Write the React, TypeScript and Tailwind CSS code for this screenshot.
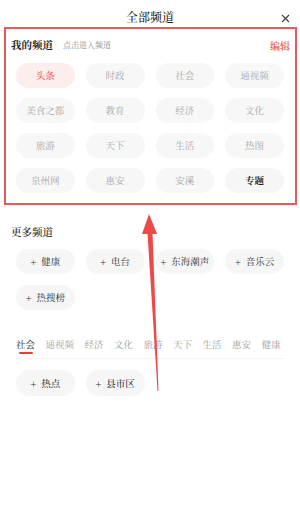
import React from "react";

const myChannels = [
  "头条", "时政", "社会", "通视频",
  "美食之都", "教育", "经济", "文化",
  "旅游", "天下", "生活", "热图",
  "泉州网", "惠安", "安溪", "专题",
];

const moreChannels = ["健康", "电台", "东海潮声", "音乐云", "热搜榜"];

const tabs = ["社会", "通视频", "经济", "文化", "旅游", "天下", "生活", "惠安", "健康"];

export default function App() {
  return (
    <div className="relative w-[300px] h-[522px] bg-white overflow-hidden font-['Noto_Serif_CJK_SC','Noto_Sans_CJK_SC',sans-serif]">
      {/* title bar */}
      <div className="relative h-[34px] flex items-center justify-center">
        <span className="text-[12px] font-medium text-[#222]">全部频道</span>
        <svg className="absolute right-[10px] top-[14px]" width="9" height="9" viewBox="0 0 9 9">
          <path d="M1 1L8 8M8 1L1 8" stroke="#444" strokeWidth="1.2" />
        </svg>
      </div>

      {/* my channels */}
      <div className="h-[22px] flex items-center pl-[11px] pr-[10px]">
        <span className="text-[10.5px] font-bold text-[#222]">我的频道</span>
        <span className="ml-[10px] text-[8px] text-[#888]">点击进入频道</span>
        <span className="ml-auto text-[10px] font-medium text-[#e0413a]">编辑</span>
      </div>
      <div className="mt-[7px] px-4 grid grid-cols-4 gap-x-[11px] gap-y-[10px]">
        {myChannels.map((c, i) => (
          <div
            key={c}
            className={
              "h-[25px] rounded-full flex items-center justify-center text-[9.5px] " +
              (i === 0
                ? "bg-[#fdeeee] text-[#e2453e]"
                : c === "专题"
                ? "bg-[#f6f6f6] text-[#222] font-bold"
                : "bg-[#f7f7f7] text-[#a8a8a8]")
            }
          >
            {c}
          </div>
        ))}
      </div>

      {/* more channels */}
      <div className="mt-[29px] h-[20px] flex items-center pl-[11px]">
        <span className="text-[10.5px] font-medium text-[#222]">更多频道</span>
      </div>
      <div className="mt-[7px] px-4 grid grid-cols-4 gap-x-[11px] gap-y-[11px]">
        {moreChannels.map((c) => (
          <div
            key={c}
            className="h-[25px] rounded-full bg-[#f6f6f6] flex items-center justify-center gap-[5px] text-[9.5px] text-[#333]"
          >
            <span className="text-[10px]">+</span>
            <span>{c}</span>
          </div>
        ))}
      </div>

      {/* tabs */}
      <div className="mt-[27px] mx-4 flex gap-x-[10.5px] border-b border-[#f4f4f4]">
        {tabs.map((t, i) => (
          <div key={t + i} className="flex flex-col items-center">
            <span className={"text-[9.5px] leading-[14px] " + (i === 0 ? "text-[#222]" : "text-[#a0a0a0]")}>
              {t}
            </span>
            <span className={"mt-[1px] h-[2px] w-[14px] rounded-full " + (i === 0 ? "bg-[#e0413a]" : "bg-transparent")} />
            <span className="h-[4px]" />
          </div>
        ))}
      </div>
      <div className="mt-[11px] px-4 grid grid-cols-4 gap-x-[11px]">
        {["热点", "县市区"].map((c) => (
          <div
            key={c}
            className="h-[26px] rounded-full bg-[#f6f6f6] flex items-center justify-center gap-[5px] text-[9.5px] text-[#333] font-medium"
          >
            <span className="text-[10px]">+</span>
            <span>{c}</span>
          </div>
        ))}
      </div>

      {/* annotation overlay */}
      <div className="absolute left-[4px] top-[27px] w-[293px] h-[178px] border-2 border-[#e35b5b] pointer-events-none" />
      <svg className="absolute inset-0 pointer-events-none" width="300" height="522" viewBox="0 0 300 522">
        <polygon points="149,214 142,234 157,234" fill="#ee4848" />
        <polygon points="147.5,233 152.5,233 158.5,391 157.5,391" fill="#ee4848" />
      </svg>
    </div>
  );
}
